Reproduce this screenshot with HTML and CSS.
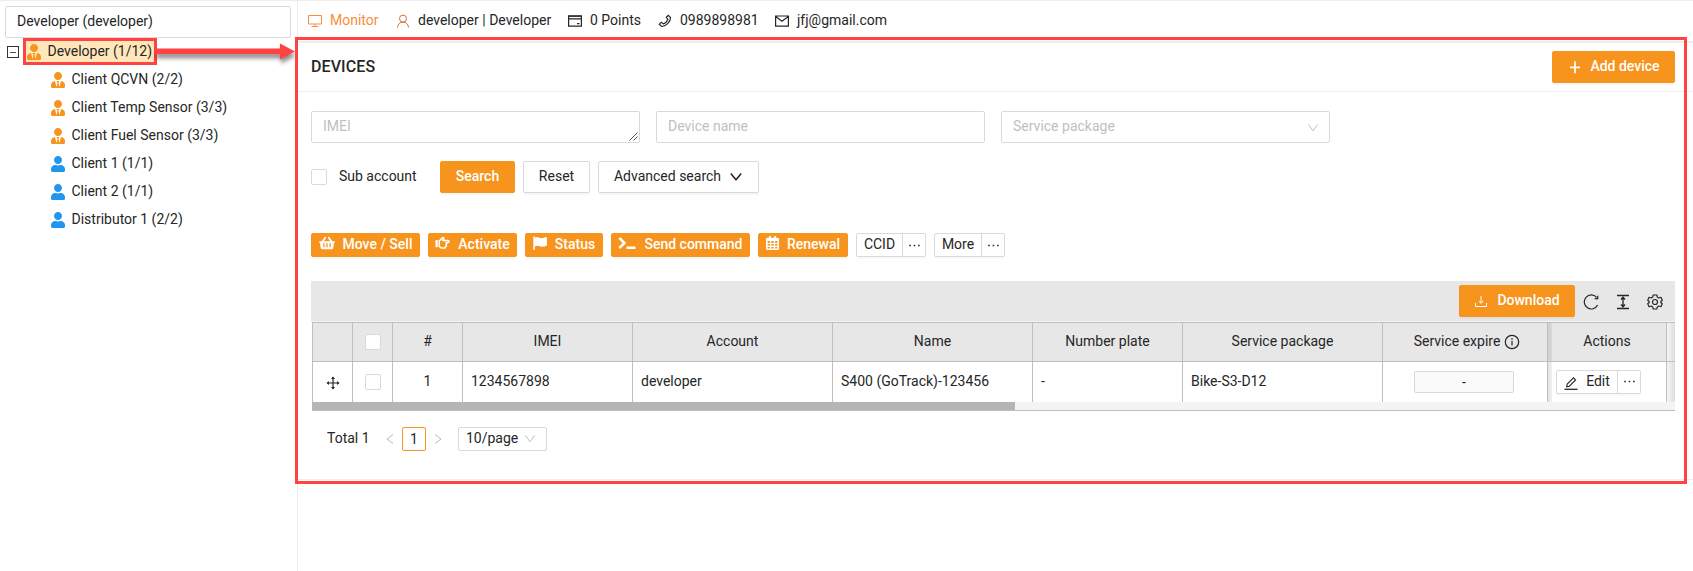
FILE: index.html
```html
<!DOCTYPE html>
<html lang="en">
<head>
<meta charset="utf-8">
<title>Devices</title>
<link rel="stylesheet" href="styles.css">
</head>
<body>
<svg class="sprite" aria-hidden="true">
  <symbol id="tie" viewBox="0 0 448 512"><path d="M224 256c70.700 0 128-57.300 128-128S294.700 0 224 0 96 57.300 96 128s57.300 128 128 128zm95.800 32.600L272 480l-32-136 32-56h-96l32 56-32 136-47.800-191.400C56.900 292 0 350.300 0 422.400V464c0 26.500 21.500 48 48 48h352c26.500 0 48-21.500 48-48v-41.600c0-72.100-56.900-130.400-128.200-133.800z"/></symbol>
  <symbol id="user" viewBox="0 0 448 512"><path d="M224 256c70.700 0 128-57.300 128-128S294.700 0 224 0 96 57.300 96 128s57.300 128 128 128zm89.600 32h-16.700c-22.200 10.200-46.900 16-72.900 16s-50.600-5.800-72.900-16h-16.700C60.200 288 0 348.200 0 422.400V464c0 26.500 21.500 48 48 48h352c26.500 0 48-21.500 48-48v-41.600c0-74.200-60.200-134.400-134.400-134.400z"/></symbol>
  <symbol id="down" viewBox="0 0 12 12"><path d="M1.500 2.500 6 8.800l4.500-6.300" fill="none" stroke="currentColor"/></symbol>
  <symbol id="dots" viewBox="0 0 14 14"><path d="M1.300 6.200h1.700v1.700H1.300zM6.100 6.200h1.700v1.700H6.100zM10.900 6.200h1.700v1.700h-1.700z"/></symbol>
</svg>
<div class="app">
  <aside class="sidebar">
    <div class="account">Developer (developer)</div>
    <ul class="tree">
      <li class="node root"><span class="toggle"></span><span class="selected"><svg class="person orange"><use href="#tie"/></svg>Developer (1/12)</span></li>
      <li class="node"><svg class="person orange"><use href="#tie"/></svg>Client QCVN (2/2)</li>
      <li class="node"><svg class="person orange"><use href="#tie"/></svg>Client Temp Sensor (3/3)</li>
      <li class="node"><svg class="person orange"><use href="#tie"/></svg>Client Fuel Sensor (3/3)</li>
      <li class="node"><svg class="person blue"><use href="#user"/></svg>Client 1 (1/1)</li>
      <li class="node"><svg class="person blue"><use href="#user"/></svg>Client 2 (1/1)</li>
      <li class="node"><svg class="person blue"><use href="#user"/></svg>Distributor 1 (2/2)</li>
    </ul>
  </aside>
  <main class="main">
    <header class="topbar">
      <span class="info monitor"><svg class="i14" viewBox="0 0 14 14"><path d="M.5 1.500h13v8.500H.5zM7 10v2.500M3.500 12.500h7" fill="none" stroke="currentColor"/></svg>Monitor</span>
      <span class="info owner"><svg class="i14" viewBox="0 0 14 14"><circle cx="7" cy="4.600" r="3.500"/><path d="M1.500 13.500c.2-3.200 2.300-5.400 5.500-5.400s5.300 2.200 5.500 5.400"/></svg>developer | Developer</span>
      <span class="info points"><svg class="i14" viewBox="0 0 14 14"><path d="M.6 1.800h12.800v10.400H.6zM.6 4.900h12.800M9 9.700h2.500" stroke-width="1.200"/><path d="M.6 2.300h12.800" stroke-width="1"/></svg>0 Points</span>
      <span class="info phone"><svg class="i14" viewBox="0 0 14 14"><path d="m8.300 3.300 2-1.900 2.200 2.200c.3 3.800-4.900 9.100-8.900 8.900L1.300 10.200l2-2 2.100 1.700c1.800-.7 3.700-2.600 4.500-4.500z" stroke-width="1.200"/></svg>0989898981</span>
      <span class="info mail"><svg class="i14" viewBox="0 0 14 14"><path d="M.6 2h12.800v10.200H.6zM1 2.700l6 4.600 6-4.600" stroke-width="1.200"/></svg>jfj@gmail.com</span>
    </header>
    <section class="titlebar">
      <h1 class="title">DEVICES</h1>
      <button class="btn primary add"><svg class="i14" viewBox="0 0 14 14"><path d="M8 1.300v12M3 7.300h10" fill="none" stroke="currentColor" stroke-width="1.700"/></svg>Add device</button>
    </section>
    <section class="content">
      <div class="filters">
        <div class="field">IMEI<svg class="grip" viewBox="0 0 9 9"><path d="M.5 8.500l8-8M4.500 8.500l4-4" fill="none" stroke="#555"/></svg></div>
        <div class="field">Device name</div>
        <div class="field">Service package<svg class="caret"><use href="#down"/></svg></div>
      </div>
      <div class="actions">
        <span class="check"></span><span class="check-label">Sub account</span>
        <button class="btn primary search">Search</button>
        <button class="btn reset">Reset</button>
        <button class="btn advanced">Advanced search<svg class="adv-caret" viewBox="0 0 14 14"><path d="m1.800 3.500 5.200 6.300 5.200-6.300" fill="none" stroke="currentColor" stroke-width="1.500"/></svg></button>
      </div>
      <div class="tools">
        <button class="btn small primary w109"><svg class="fa basket" viewBox="0 0 576 512"><path fill-rule="evenodd" d="M576 216v16c0 13.300-10.700 24-24 24h-8l-26.100 182.800C514.500 462.400 494.300 480 470.400 480H105.600c-23.900 0-44.100-17.600-47.500-41.200L32 256h-8c-13.300 0-24-10.700-24-24v-16c0-13.300 10.700-24 24-24h67.300l106.800-146.800c10.400-14.300 30.400-17.500 44.700-7.100s17.500 30.400 7.100 44.700L170.500 192h235.100L326.100 82.800c-10.400-14.300-7.200-34.300 7.100-44.700s34.300-7.200 44.700 7.100L484.700 192H552c13.300 0 24 10.700 24 24zM312 392V280c0-13.300-10.700-24-24-24s-24 10.700-24 24v112c0 13.300 10.700 24 24 24s24-10.700 24-24zm112 0V280c0-13.300-10.700-24-24-24s-24 10.700-24 24v112c0 13.300 10.700 24 24 24s24-10.700 24-24zm-224 0V280c0-13.300-10.700-24-24-24s-24 10.700-24 24v112c0 13.300 10.700 24 24 24s24-10.700 24-24z"/></svg>Move / Sell</button>
        <button class="btn small primary w89"><svg class="fa hand" viewBox="0 0 15 14"><path d="M.5 4h2.300v7.200H.5z" fill="currentColor"/><path d="M4.200 10.500V5l3.200-3.300c.9-.7 2 .3 1.300 1.300L7.600 4.400h5.300c1.500 0 1.500 2.200 0 2.200H11c1.100.5.900 1.700 0 2 .7.600.4 1.700-.5 1.900.2 1-.3 1.600-1.200 1.600H7.200c-1.200 0-1.800-1.100-3-1.600z" fill="none" stroke="currentColor" stroke-width="1.500" stroke-linejoin="round"/></svg>Activate</button>
        <button class="btn small primary w78"><svg class="fa flag" viewBox="0 0 14 14"><path d="M.3.500h1.500v1.200c2.300-1.100 4 .1 5.800.4 2 .3 3.800-.8 5.600-1.200.4 0 .7.200.7.600v7.900c-2.200 1.100-4.400 1.700-6.600 1-2-.7-3.600-.8-5.500.1V14H.3z"/></svg>Status</button>
        <button class="btn small primary w139"><svg class="fa term" viewBox="0 0 18 14"><path d="m1.300 2 5.200 5-5.200 5M8.500 11.700h9" fill="none" stroke="currentColor" stroke-width="2.500"/></svg>Send command</button>
        <button class="btn small primary w90"><svg class="fa cal" viewBox="0 0 13 14"><path fill-rule="evenodd" d="M3 0h1.800v1.700h3.400V0H10v1.700h1.500c.9 0 1.500.6 1.500 1.400v9.500c0 .8-.6 1.400-1.500 1.400h-10C.6 14 0 13.400 0 12.600V3.100c0-.8.6-1.400 1.500-1.400H3zM1.600 5v1.900h2.300V5zm3.700 0v1.900h2.400V5zm3.800 0v1.900h2.300V5zM1.600 8v1.700h2.300V8zm3.700 0v1.700h2.400V8zm3.800 0v1.700h2.300V8zm-7.500 2.900v1.700h2.300v-1.700zm3.700 0v1.700h2.400v-1.700zm3.800 0v1.700h2.300v-1.700z"/></svg>Renewal</button>
        <div class="split"><span class="split-text w45">CCID</span><span class="split-more"><svg><use href="#dots"/></svg></span></div>
        <div class="split"><span class="split-text w46">More</span><span class="split-more"><svg><use href="#dots"/></svg></span></div>
      </div>
      <div class="table-bar">
        <button class="btn primary download"><svg class="i14" viewBox="0 0 14 14"><path d="M1.500 9v3.500h11V9M7 2v7M4.800 7 7 9.300 9.200 7" fill="none" stroke="currentColor"/></svg>Download</button>
        <svg class="i16" viewBox="0 0 16 16"><path d="M13.600 3.400A7 7 0 1 0 14.600 11M14.700 1.800v2.800h-3" fill="none" stroke="currentColor" stroke-width="1.200"/></svg>
        <svg class="i16" viewBox="0 0 16 16"><path d="M2 1.500h12M2 14.500h12M8 4v8M6 5.500 8 3.300l2 2.200M6 10.500l2 2.200 2-2.200" fill="none" stroke="currentColor" stroke-width="1.300"/></svg>
        <svg class="i16" viewBox="0 0 16 16"><path d="m6.200 1-.5 2.100-1.500.9-2.100-.7L.7 6.200 2.200 7.500v1L.7 9.800l1.400 2.900 2.100-.7 1.500.9.500 2.100h3.600l.5-2.100 1.500-.9 2.100.7 1.400-2.900-1.500-1.300v-1l1.500-1.300-1.400-2.900-2.100.7-1.500-.9L9.800 1z" fill="none" stroke="currentColor" stroke-width="1.200" stroke-linejoin="round"/><circle cx="8" cy="8" r="2.500" fill="none" stroke="currentColor" stroke-width="1.200"/></svg>
      </div>
      <div class="grid-wrap">
        <div class="grid head">
          <span class="cell"></span><span class="cell"><i class="check"></i></span><span class="cell">#</span><span class="cell">IMEI</span><span class="cell">Account</span><span class="cell">Name</span><span class="cell">Number plate</span><span class="cell">Service package</span><span class="cell expire-head">Service expire<svg class="about" viewBox="0 0 16 16"><circle cx="8" cy="8" r="6.700" fill="none" stroke="currentColor" stroke-width="1.200"/><path d="M7.400 7h1.200v4.500H7.400zM7.300 4.300h1.400v1.400H7.300z"/></svg></span><span class="cell fixed">Actions</span><span class="edge"></span>
        </div>
        <div class="grid row">
          <span class="cell"><svg class="move" viewBox="0 0 14 14"><path d="M7 1.500v11M1.500 7h11" fill="none" stroke="currentColor" stroke-width="1.200"/><path d="m7 .5 2 2.400H5zM7 13.500l2-2.400H5zM.5 7l2.400-2v4zM13.500 7l-2.400-2v4z"/></svg></span><span class="cell"><i class="check"></i></span><span class="cell">1</span><span class="cell left">1234567898</span><span class="cell left">developer</span><span class="cell left">S400 (GoTrack)-123456</span><span class="cell left">-</span><span class="cell left">Bike-S3-D12</span><span class="cell"><span class="expire">-</span></span><span class="cell fixed left"><span class="split edit"><span class="split-text w60"><svg class="pen" viewBox="0 0 14 14"><path d="M.5 13.300h13" stroke-width="1.300"/><path d="m2.700 10.700.5-2.600L9.500 1.800l2.100 2.100-6.300 6.300z"/></svg>Edit</span><span class="split-more"><svg><use href="#dots"/></svg></span></span></span><span class="edge"></span>
        </div>
        <div class="scroll"><div class="thumb"></div></div>
      </div>
      <div class="pager">
        <span class="total">Total 1</span>
        <svg class="arrow" viewBox="0 0 12 12"><path d="M9 1.500 3 6l6 4.500" fill="none" stroke="#bbb"/></svg>
        <span class="page">1</span>
        <svg class="arrow" viewBox="0 0 12 12"><path d="M3 1.500 9 6l-6 4.500" fill="none" stroke="#bbb"/></svg>
        <span class="size">10/page<svg class="caret"><use href="#down"/></svg></span>
      </div>
    </section>
  </main>
</div>
<div class="mark mark-node"></div>
<svg class="callout" viewBox="0 0 145 30"><path d="M0 7.500h125V2.500L140 10.500l-15 8v-5.300H0z" fill="#ff4343"/></svg>
<div class="mark mark-panel"></div>
</body>
</html>
```
FILE: styles.css
```css
* { box-sizing: border-box; }
body { margin: 0; background: #fff; color: #262626; font: 14px/22px Roboto, "Liberation Sans", sans-serif; }
.sprite { position: absolute; width: 0; height: 0; }
svg { fill: currentColor; flex: none; }
.app { display: flex; height: 571px; border-top: 1px solid #eee; overflow: hidden; }
.sidebar { width: 298px; border-right: 1px solid #eee; padding: 5px 6px 0 5px; }
.account { height: 32px; width: 286px; border: 1px solid #d9d9d9; border-radius: 2px; padding: 3px 11px; }
.tree { list-style: none; margin: -1px 0 0; padding: 0; }
.node { height: 28px; display: flex; align-items: center; padding-left: 46px; }
.root { padding-left: 2px; }
.toggle { width: 12px; height: 12px; border: 1px solid #333; margin: 2px 6px 0 0; display: flex; align-items: center; justify-content: center; }
.toggle::after { content: ""; width: 6px; height: 1px; background: #555; }
.selected { display: flex; align-items: center; width: 131px; height: 24px; background: #ffe7ba; padding-left: 2px; white-space: nowrap; }
.person { width: 14px; height: 16px; margin-right: 6.500px; position: relative; top: 1px; }
.orange { color: #f7941e; }
.blue { color: #2196ee; }
.main { flex: 1; min-width: 0; }
.topbar { height: 42px; display: flex; align-items: flex-start; padding: 8px 0 0 10px; border-bottom: 2px solid #eee; }
.info { display: flex; align-items: center; white-space: nowrap; }
.info .i14 { fill: none; stroke: currentColor; margin-right: 8px; position: relative; top: 1px; }
.monitor { width: 88px; color: #fa8c3c; }
.owner { width: 172px; }
.owner .i14 { color: #d4703c; }
.points { width: 90px; }
.phone { width: 117px; }
.i14 { width: 14px; height: 14px; }
.i16 { width: 16px; height: 16px; position: relative; top: 2px; }
.titlebar { height: 49px; display: flex; justify-content: space-between; align-items: flex-start; padding: 8px 18px 0 13px; border-bottom: 1px solid #eee; }
.title { font-size: 16px; line-height: 32px; font-weight: 500; margin: 0; letter-spacing: .1px; }
.btn { height: 32px; padding: 0 0 3px; border: 1px solid #d9d9d9; border-radius: 2px; background: #fff; color: #262626; font: inherit; box-shadow: 0 2px 0 rgba(0,0,0,.03); display: flex; align-items: center; justify-content: center; white-space: nowrap; }
.primary { background: #f7941e; border-color: #f7941e; color: #fff; font-weight: 500; }
.add { width: 123px; }
.add .i14, .download .i14 { margin-right: 9px; position: relative; top: 1px; }
.content { height: 388px; padding: 19px 18px 0 13px; border-bottom: 1px solid #eee; }
.filters { display: flex; gap: 16px; }
.field { width: 329px; height: 32px; border: 1px solid #d9d9d9; border-radius: 2px; padding: 3px 11px; color: #bfbfbf; position: relative; }
.grip { position: absolute; right: 1px; bottom: 1px; width: 9px; height: 9px; }
.caret { width: 12px; height: 12px; color: #bfbfbf; }
.field .caret { position: absolute; right: 10px; top: 10px; }
.actions { display: flex; align-items: center; margin-top: 18px; height: 32px; }
.check { display: block; width: 16px; height: 16px; border: 1px solid #d9d9d9; border-radius: 2px; background: #fff; }
.actions .check { margin-top: -1px; }
.check-label { width: 101px; margin: -2px 0 0 12px; }
.search { width: 75px; margin-right: 8px; }
.reset { width: 67px; margin-right: 8px; }
.advanced { width: 161px; }
.adv-caret { width: 14px; height: 14px; margin-left: 8px; position: relative; top: 1px; }
.tools { display: flex; gap: 8px; margin-top: 40px; }
.small { height: 24px; padding-bottom: 2px; }
.fa { height: 14px; margin-right: 8px; position: relative; top: -1px; }
.basket { width: 16px; } .hand { width: 15px; } .flag { width: 14px; } .term { width: 18px; } .cal { width: 13px; }
.w109 { width: 109px; } .w89 { width: 89px; } .w78 { width: 78px; } .w139 { width: 139px; } .w90 { width: 90px; }
.split { display: flex; height: 24px; border: 1px solid #d9d9d9; border-radius: 2px; background: #fff; box-shadow: 0 2px 0 rgba(0,0,0,.02); }
.split-text { display: flex; align-items: center; justify-content: center; line-height: 20px; padding-bottom: 2px; }
.w45 { width: 45px; } .w46 { width: 46px; } .w60 { width: 60px; }
.split-more { width: 23px; border-left: 1px solid #d9d9d9; display: flex; align-items: center; justify-content: center; }
.split-more svg { width: 13px; height: 13px; }
.table-bar { height: 41px; margin-top: 24px; background: #e7e7e7; display: flex; align-items: flex-start; justify-content: flex-end; gap: 16px; padding: 4px 12px 0 0; border-bottom: 1px solid #f2f2f2; }
.table-bar .i16 { top: 9px; }
.download { width: 116px; margin-right: -8px; padding-bottom: 2px; }
.grid-wrap { margin-left: 1px; border-bottom: 1px solid #bfbfbf; }
.grid { display: grid; grid-template-columns: 41px 40px 70px 170px 200px 200px 150px 200px 165px 119px 8px; border-top: 1px solid #bfbfbf; }
.head { height: 39px; background: #e7e7e7; }
.row { height: 41px; }
.cell { display: flex; align-items: center; justify-content: center; border-right: 1px solid #bfbfbf; padding-bottom: 3px; white-space: nowrap; }
.cell .check { position: relative; top: 1px; }
.cell:first-child { border-left: 1px solid #bfbfbf; }
.left { justify-content: flex-start; padding-left: 8px; }
.fixed { background: linear-gradient(90deg, rgba(0,0,0,.11), rgba(0,0,0,.06) 4px, transparent 4px); }
.head .expire-head { padding-left: 4px; }
.edge { background: linear-gradient(90deg, #f5f5f5, #dedede); }
.about { width: 16px; height: 16px; margin-left: 4px; position: relative; top: 1px; }
.move { width: 14px; height: 14px; position: relative; top: 2px; }
.expire { width: 100px; height: 22px; line-height: 20px; border: 1px solid #d9d9d9; border-radius: 2px; background: #fafafa; text-align: center; margin: 2px 2px 0 0; }
.edit { position: relative; top: 1px; }
.pen { width: 14px; height: 14px; margin-right: 8px; position: relative; top: 2px; fill: none; stroke: currentColor; stroke-width: 1.100; }
.scroll { height: 8px; background: #f4f4f4; }
.thumb { width: 703px; height: 8px; background: #b5b5b5; }
.pager { display: flex; align-items: center; margin: 16px 0 0 16px; height: 24px; }
.total { width: 57px; margin-top: -3px; }
.arrow { width: 12px; height: 12px; }
.page { width: 24px; height: 24px; border: 1px solid #f7941e; border-radius: 2px; margin: 0 6px; text-align: center; }
.size { width: 89px; height: 24px; border: 1px solid #d9d9d9; border-radius: 2px; margin-left: 14px; padding: 0 0 2px 7px; line-height: 20px; display: flex; align-items: center; gap: 6px; }
.size .caret { position: relative; top: 1px; }
.mark { position: absolute; border: 3px solid #ff4343; }
.mark-node { left: 23px; top: 38px; width: 134px; height: 27px; }
.mark-panel { left: 295px; top: 37px; width: 1392px; height: 447px; }
.callout { position: absolute; left: 155px; top: 41px; width: 145px; height: 30px; filter: drop-shadow(1px 4px 2px rgba(0,0,0,.45)); }
```
